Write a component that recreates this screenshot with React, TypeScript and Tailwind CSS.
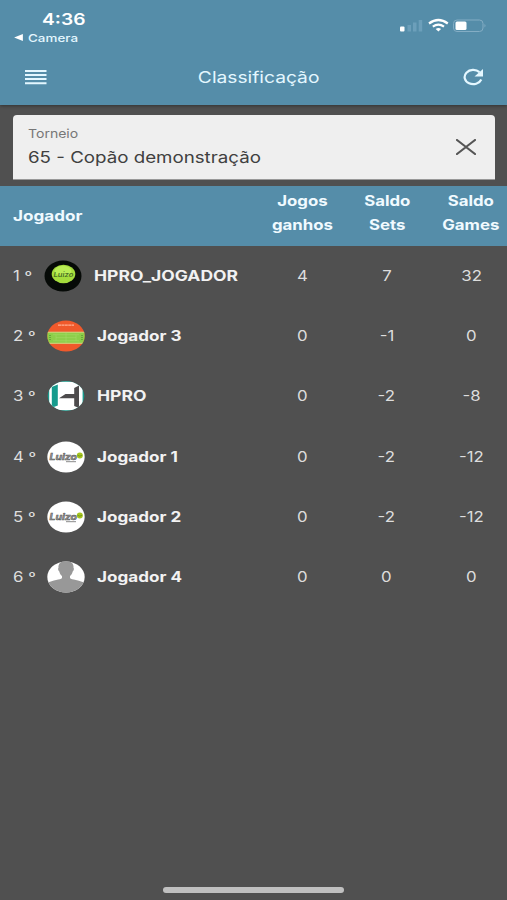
import type { ReactNode } from 'react';

interface Player {
  position: number;
  name: string;
  avatar: ReactNode;
  wins: number;
  sets: number;
  games: number;
  positionClass: string;
  nameClass: string;
}

function TennisBall() {
  return (
    <svg viewBox="0 0 38 32" className="h-8 w-[38px]">
      <ellipse cx="19" cy="16" rx="18.5" ry="15.5" fill="#060a07" />
      <ellipse cx="19.5" cy="14" rx="11.8" ry="9.2" fill="#a4dc3c" />
      <ellipse cx="19" cy="11" rx="8.5" ry="5" fill="#b9ec55" />
      <text x="19.5" y="17" textAnchor="middle" fontFamily="Inter, sans-serif" fontSize="6" fontWeight="600" fontStyle="italic" fill="#4a7024" textLength="20" lengthAdjust="spacingAndGlyphs">Luizo</text>
    </svg>
  );
}

function Court() {
  return (
    <svg viewBox="0 0 38 32" className="h-8 w-[38px]">
      <clipPath id="court">
        <ellipse cx="19" cy="16" rx="18.7" ry="15.5" />
      </clipPath>
      <g clipPath="url(#court)">
        <path d="M0 0h38v32H0z" fill="#f0592b" />
        <path d="M0 12h38v11.5H0z" fill="#8ccf4a" />
        <path d="M0 12.2h38M0 23.3h38" stroke="#d8cf80" strokeWidth="1" />
        <path d="M6 14.7h26M6 20.8h26M9 14.7v6M29 14.7v6M19 13v10M9 17.7h20" stroke="#a6d866" strokeWidth=".6" />
        <path d="M3 15v5M35 15v5" stroke="#5e9c35" strokeWidth="1.5" strokeDasharray="1 1" />
        <path d="M11 5.2h16" stroke="#ffb092" strokeWidth="1.3" strokeDasharray="3 .4" />
      </g>
    </svg>
  );
}

function HproLogo() {
  return (
    <svg viewBox="0 0 38 32" className="h-8 w-[38px]">
      <clipPath id="hpro">
        <ellipse cx="19" cy="16" rx="18.3" ry="15" />
      </clipPath>
      <g clipPath="url(#hpro)">
        <path d="M0 0h38v32H0z" fill="#169b8d" />
        <rect x="2.2" y="1.8" width="33.4" height="28.4" rx="7" fill="#fff" />
        <path d="M4.8 7l6-2.5v21l-6 2.2z" fill="#169b8d" />
        <path d="M12 18.3l6.5-4.3h8.7V8L32 5.5V28l-4.800-2v-7.700z" fill="#4d4b4c" />
      </g>
    </svg>
  );
}

function LuizoLogo() {
  return (
    <svg viewBox="0 0 38 32" className="h-8 w-[38px]">
      <ellipse cx="19" cy="16" rx="18.7" ry="15.5" fill="#fff" />
      <text x="2.500" y="19" fontFamily="Inter, sans-serif" fontSize="9" fontWeight="700" fontStyle="italic" fill="#a0a0a0" stroke="#555555" strokeWidth=".5" textLength="27.5" lengthAdjust="spacingAndGlyphs">Luizo</text>
      <circle cx="32.8" cy="14.5" r="3" fill="#a5c51f" />
      <path d="M30.500 14.300q2.300 1.700 4.600 0" fill="none" stroke="#66831c" strokeWidth=".7" />
      <path d="M19 20.700h10" stroke="#8a8a8a" strokeWidth="1" />
    </svg>
  );
}

function Silhouette() {
  return (
    <svg viewBox="0 0 38 32" className="h-8 w-[38px]">
      <clipPath id="person">
        <ellipse cx="19" cy="16" rx="18.7" ry="15.5" />
      </clipPath>
      <g clipPath="url(#person)">
        <path d="M0 0h38v32H0z" fill="#fff" />
        <path d="M19 0c-5 0-8 2.700-7.500 6.800-.9.500-.2 3.400.8 3.800.5 2.300 1.500 3.500 2.700 4.500v2C13.500 19 6 19 0 22v10h38V22c-6-3-13.500-3-15-4.900v-2c1.200-1 2.200-2.200 2.700-4.500 1-.4 1.700-3.300.8-3.800C27 2.700 24 0 19 0z" fill="#989898" />
      </g>
    </svg>
  );
}

const players: Player[] = [
  { position: 1, name: 'HPRO_JOGADOR', avatar: <TennisBall />, wins: 4, sets: 7, games: 32, positionClass: 'w-[31px]', nameClass: 'scale-x-[1.25]' },
  { position: 2, name: 'Jogador 3', avatar: <Court />, wins: 0, sets: -1, games: 0, positionClass: 'w-[33.5px]', nameClass: 'scale-x-[1.22]' },
  { position: 3, name: 'HPRO', avatar: <HproLogo />, wins: 0, sets: -2, games: -8, positionClass: 'w-[34px]', nameClass: 'scale-x-[1.25]' },
  { position: 4, name: 'Jogador 1', avatar: <LuizoLogo />, wins: 0, sets: -2, games: -12, positionClass: 'w-[34px]', nameClass: 'scale-x-[1.22]' },
  { position: 5, name: 'Jogador 2', avatar: <LuizoLogo />, wins: 0, sets: -2, games: -12, positionClass: 'w-[34px]', nameClass: 'scale-x-[1.22]' },
  { position: 6, name: 'Jogador 4', avatar: <Silhouette />, wins: 0, sets: 0, games: 0, positionClass: 'w-[34px]', nameClass: 'scale-x-[1.22]' },
];

function StatusBar() {
  return (
    <div className="flex h-[50px] justify-between text-white">
      <div className="pt-[8.5px]">
        <div className="ml-[42px] origin-left scale-x-[1.2] text-base leading-5 font-semibold">4:36</div>
        <div className="ml-[14px] flex items-center text-[#e4f7ff]">
          <svg viewBox="0 0 10 8" className="h-[7px] w-[9px]">
            <path d="M0 4l10-4v8z" fill="#ffffff" />
          </svg>
          <span className="ml-[5px] origin-left scale-x-[1.22] text-[11px] leading-[18px] font-medium">Camera</span>
        </div>
      </div>
      <svg viewBox="0 0 90 20" className="mt-4 mr-[19px] h-5 w-[90px]">
        <rect x="2" y="10.5" width="4.5" height="5" rx="1" fill="#fff" />
        <path d="M9.5 9H13v6.500H9.500zM15 6.500h3.500v9H15zM20.700 4h3.500v11.500h-3.500z" fill="#6c9fba" />
        <g fill="none" stroke="#fff" strokeWidth="2.2">
          <path d="M31 7.500Q40.400.500 49.800 7.500" />
          <path d="M34.800 10.700q5.600-4 11.200 0" />
        </g>
        <path d="M37.700 13q2.700-1.900 5.400 0l-2.700 2.600z" fill="#fff" />
        <rect x="55.5" y="4" width="29.5" height="11.5" rx="3.5" fill="none" stroke="#84adc4" strokeWidth="1" />
        <rect x="57.5" y="5.5" width="11" height="8.5" rx="1.5" fill="#fff" />
        <path d="M86.500 8q2 1.700 0 3.500z" fill="#84adc4" />
      </svg>
    </div>
  );
}

function StatCell({ children }: { children: ReactNode }) {
  return (
    <div className="flex w-[84.5px] shrink-0 justify-center text-center">
      <span className="scale-x-[1.2]">{children}</span>
    </div>
  );
}

export default function App() {
  return (
    <div className="flex h-[900px] w-[507px] flex-col overflow-hidden bg-[#505050] font-[Inter,sans-serif]">
      <header className="h-[105px] shrink-0 bg-[#558da9] shadow-[0_1px_3px_#333333]">
        <StatusBar />
        <div className="flex h-[54px] items-center justify-between pr-[23px] pl-[25px] text-[#e4f7ff]">
          <svg viewBox="0 0 22 16" className="h-4 w-[22px]">
            <path d="M0 2h21.500M0 6h21.500M0 10h21.500M0 14.200h21.500" stroke="currentColor" strokeWidth="2.1" />
          </svg>
          <h1 className="ml-2 scale-x-[1.2] text-base">Classificação</h1>
          <svg viewBox="0 0 22 18" className="h-[18px] w-[22px]">
            <path d="M19.300 11.500A8.600 7.100 0 1 1 17.500 4.200" fill="none" stroke="currentColor" strokeWidth="2.2" />
            <path d="M21 1v7.500h-8.500z" fill="currentColor" />
          </svg>
        </div>
      </header>

      {/* Tournament select */}
      <div className="mt-2.5 mr-3 ml-[13px] flex h-[65px] shrink-0 items-center justify-between rounded-t border-b border-[#999999] bg-[#efefef] pr-[19px] pl-[15px]">
        <div>
          <div className="origin-left scale-x-[1.17] pt-px text-xs leading-4 text-[#777777]">Torneio</div>
          <div className="mt-[3px] origin-left scale-x-[1.17] text-base leading-6 text-[#404040]">65 - Copão demonstração</div>
        </div>
        <svg viewBox="0 0 20 16" className="h-4 w-5">
          <path d="M1 1l18 14M19 1L1 15" stroke="#555555" strokeWidth="2.2" strokeLinecap="round" />
        </svg>
      </div>

      {/* Standings */}
      <div className="mt-[5.5px] flex h-[60.5px] shrink-0 items-center bg-[#558da9] text-sm leading-6 font-bold text-[#f0faff]">
        <div className="w-[260px] shrink-0 pl-[13px]">
          <span className="inline-block origin-left scale-x-[1.22]">Jogador</span>
        </div>
        <div className="flex pb-[5px]">
          <StatCell>Jogos<br />ganhos</StatCell>
          <StatCell>Saldo<br />Sets</StatCell>
          <StatCell>Saldo<br />Games</StatCell>
        </div>
      </div>

      <main className="flex-1">
        {players.map((player) => (
          <div key={player.position} className="flex h-[60.2px] items-center text-sm text-[#dddddd]">
            <div className="flex w-[260px] shrink-0 items-center pl-[13px]">
              <div className={`${player.positionClass} shrink-0`}>
                <span className="inline-block origin-left scale-x-[1.2] whitespace-nowrap">{player.position} º</span>
              </div>
              {player.avatar}
              <div className="pl-3">
                <span className={`inline-block origin-left font-bold text-[#f2f2f2] ${player.nameClass}`}>{player.name}</span>
              </div>
            </div>
            <StatCell>{player.wins}</StatCell>
            <StatCell>{player.sets}</StatCell>
            <StatCell>{player.games}</StatCell>
          </div>
        ))}
      </main>

      <div className="mb-[7.5px] h-[5.5px] w-[181px] shrink-0 self-center rounded-full bg-[#c0c0c0]" />
    </div>
  );
}
